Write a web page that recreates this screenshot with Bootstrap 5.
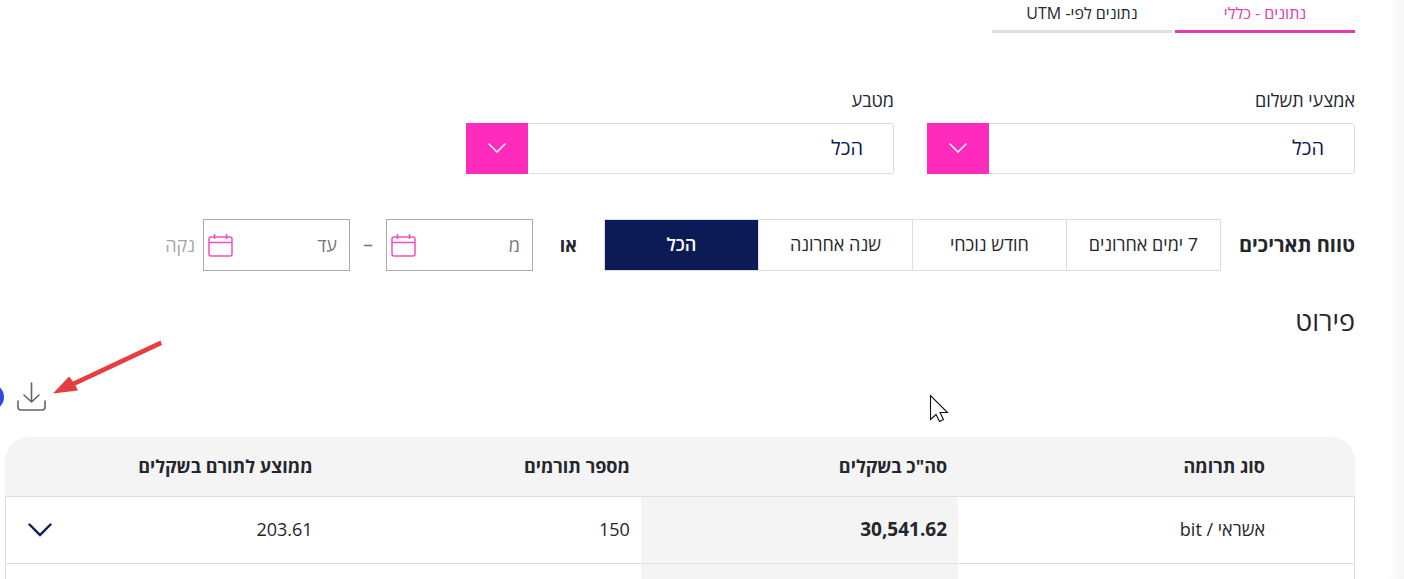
<!DOCTYPE html>
<html lang="he" dir="rtl">
<head>
<meta charset="utf-8">
<meta name="viewport" content="width=device-width, initial-scale=1">
<title>נתונים - כללי</title>
<link href="https://cdn.jsdelivr.net/npm/bootstrap@5.3.0/dist/css/bootstrap.min.css" rel="stylesheet">
<style>
  :root { --pink: #ff2bbd; --rose: #e03cac; --navy: #0c1b56; --line: #dddee1; --ink: #24262d; }
  body { font-family: "Open Sans", "Noto Sans", "Liberation Sans", sans-serif; color: var(--ink); font-size: 18px; line-height: 24px; background: #fff; }
  svg { flex-shrink: 0; }
  .page { padding-right: 49px; padding-left: 5px; background: linear-gradient(to left, #f5f5f5, #fff 16px); }
  .tabs { gap: 3px; }
  .tab-link { width: 180px; height: 33px; padding-top: 1px; border-bottom: 3px solid #dedfe2; font-size: 16px; color: var(--ink); text-align: center; text-decoration: none; }
  .tab-link.active { color: var(--rose); border-color: var(--rose); }
  .filters { margin-top: 55px; gap: 33px; }
  .filter-field { flex: 0 1 428px; }
  .filter-field label { height: 35px; }
  .pick { appearance: none; height: 51px; padding: 0 30px 2px; border: 1px solid var(--line); border-radius: 3px; font-size: 20px; color: var(--navy); background: #fff; }
  .pick-arrow { width: 62px; padding-bottom: 2px; background: var(--pink); pointer-events: none; }
  .dates { margin-top: 45px; }
  .dates h2 { font-size: 20px; line-height: 24px; font-weight: 700; margin: 0 0 0 18px; }
  .range-btn { width: 154px; height: 52px; border: 1px solid var(--line); border-inline-end-width: 0; background: #fff; color: var(--ink); font-size: 18px; padding: 0 0 2px; }
  .range-btn.active { background: var(--navy); color: #fff; width: 155px; border-inline-end-width: 1px; font-weight: 600; }
  .or-word { width: 71px; font-weight: 700; }
  .date-box { width: 147px; height: 52px; border: 1px solid #a9aaac; padding: 0 12px 0 4px; }
  .date-box input { min-width: 0; border: 0; outline: 0; padding: 0; background: none; }
  .date-box input::placeholder { color: #75777b; opacity: 1; }
  .dash { width: 36px; padding-bottom: 2px; color: #75777b; font-size: 20px; }
  .clear-btn { color: #a5a6a8; margin-right: 8px; }
  .section-title { margin: 34px 0 0; font-size: 27px; line-height: 32px; font-weight: 400; }
  .tools { height: 100px; padding: 45px 0 0 12px; }
  .grid-table { table-layout: fixed; border-collapse: separate; border-spacing: 0; }
  .grid-table th { height: 59px; background: #f4f4f4; font-weight: 700; padding: 0 11px 2px; }
  .grid-table td { height: 67px; border-top: 1px solid var(--line); padding: 0 11px 2px; }
  .grid-table th:first-child { border-top-right-radius: 24px; padding-right: 90px; }
  .grid-table th:last-child { border-top-left-radius: 24px; }
  .grid-table td:first-child { border-right: 1px solid var(--line); padding-right: 89px; }
  .grid-table td:last-child { border-left: 1px solid var(--line); padding: 0 0 0 22px; }
  .grid-table .total { background: #f4f4f4; font-weight: 700; font-size: 19px; }
  .c-type { width: 29.4%; } .c-num { width: 23.5%; } .c-avg { width: 16.9%; }
  .chat-dot { width: 26px; height: 26px; left: -22px; top: 384px; background: #2f45e6; }
  .red-arrow { left: 50px; top: 338px; }
  .pointer { left: 929px; top: 394px; }
</style>
</head>
<body>
<main class="page position-relative vh-100 overflow-hidden">
  <nav class="tabs d-flex">
    <a class="tab-link active" href="#general">נתונים - כללי</a>
    <a class="tab-link" href="#utm">נתונים לפי- UTM</a>
  </nav>

  <div class="filters d-flex">
    <div class="filter-field">
      <label class="d-block" for="payment">אמצעי תשלום</label>
      <div class="position-relative">
        <select class="pick w-100" id="payment"><option>הכל</option></select>
        <span class="pick-arrow position-absolute top-0 bottom-0 start-0 d-flex align-items-center justify-content-center"><svg width="18" height="10" viewBox="0 0 18 10" fill="none" stroke="#fff" stroke-width="1.5" stroke-linecap="round"><path d="M1 1l8 8 8-8"/></svg></span>
      </div>
    </div>
    <div class="filter-field">
      <label class="d-block" for="currency">מטבע</label>
      <div class="position-relative">
        <select class="pick w-100" id="currency"><option>הכל</option></select>
        <span class="pick-arrow position-absolute top-0 bottom-0 start-0 d-flex align-items-center justify-content-center"><svg width="18" height="10" viewBox="0 0 18 10" fill="none" stroke="#fff" stroke-width="1.5" stroke-linecap="round"><path d="M1 1l8 8 8-8"/></svg></span>
      </div>
    </div>
  </div>

  <div class="dates d-flex align-items-center">
    <h2>טווח תאריכים</h2>
    <div class="d-flex">
      <button type="button" class="range-btn">7 ימים אחרונים</button>
      <button type="button" class="range-btn">חודש נוכחי</button>
      <button type="button" class="range-btn">שנה אחרונה</button>
      <button type="button" class="range-btn active">הכל</button>
    </div>
    <span class="or-word text-center">או</span>
    <div class="date-box d-flex align-items-center">
      <input class="flex-fill" type="text" placeholder="מ" aria-label="מ">
      <svg width="25" height="23" viewBox="0 0 25 23" fill="none" stroke="#f052ba" stroke-width="1.5"><rect x="1" y="3" width="23" height="19" rx="2"/><path d="M1 8.500h23M6.500 0v5M18.500 0v5"/></svg>
    </div>
    <span class="dash text-center">–</span>
    <div class="date-box d-flex align-items-center">
      <input class="flex-fill" type="text" placeholder="עד" aria-label="עד">
      <svg width="25" height="23" viewBox="0 0 25 23" fill="none" stroke="#f052ba" stroke-width="1.5"><rect x="1" y="3" width="23" height="19" rx="2"/><path d="M1 8.500h23M6.500 0v5M18.500 0v5"/></svg>
    </div>
    <button type="button" class="clear-btn border-0 bg-transparent p-0">נקה</button>
  </div>

  <h1 class="section-title">פירוט</h1>

  <div class="tools d-flex justify-content-end">
    <button type="button" class="border-0 bg-transparent p-0 d-flex align-items-start" aria-label="הורדה"><svg width="29" height="30" viewBox="0 0 29 30" fill="none" stroke="#636569" stroke-width="1.6" stroke-linecap="round" stroke-linejoin="round"><path d="M14.500 1v19M7 13l7.500 7 7.500-7M1 19v6q0 3 3 3h21q3 0 3-3v-6"/></svg></button>
  </div>

  <table class="grid-table w-100">
    <colgroup><col class="c-type"><col class="c-num"><col class="c-num"><col class="c-avg"><col></colgroup>
    <thead><tr><th>סוג תרומה</th><th>סה"כ בשקלים</th><th>מספר תורמים</th><th class="text-nowrap">ממוצע לתורם בשקלים</th><th></th></tr></thead>
    <tbody>
      <tr><td>אשראי / bit</td><td class="total">30,541.62</td><td>150</td><td>203.61</td>
        <td><div class="d-flex justify-content-end"><button type="button" class="border-0 bg-transparent p-0 d-flex" aria-label="פירוט שורה"><svg width="24" height="14" viewBox="0 0 24 14" fill="none" stroke="#0c1b56" stroke-width="2.400" stroke-linecap="round"><path d="M1.500 1.500L12 12 22.500 1.500"/></svg></button></div></td></tr>
      <tr><td></td><td class="total"></td><td></td><td></td><td></td></tr>
    </tbody>
  </table>

  <span class="chat-dot position-absolute rounded-circle"></span>
  <svg class="red-arrow position-absolute" width="114" height="60" viewBox="0 0 114 60"><path d="M110.500 2.500L112 7 25.500 47.500 28 52.500 3 55.500 19 38.500 23 43.500Z" fill="#e53e42"/></svg>
  <svg class="pointer position-absolute" width="20" height="29" viewBox="0 0 20 29"><path d="M1.500 1.500v24l5.500-5 3.500 7 4-2-3.500-7h7.500Z" fill="#fff" stroke="#111" stroke-width="1.100"/></svg>
</main>
<script src="https://cdn.jsdelivr.net/npm/bootstrap@5.3.0/dist/js/bootstrap.bundle.min.js"></script>
</body>
</html>
